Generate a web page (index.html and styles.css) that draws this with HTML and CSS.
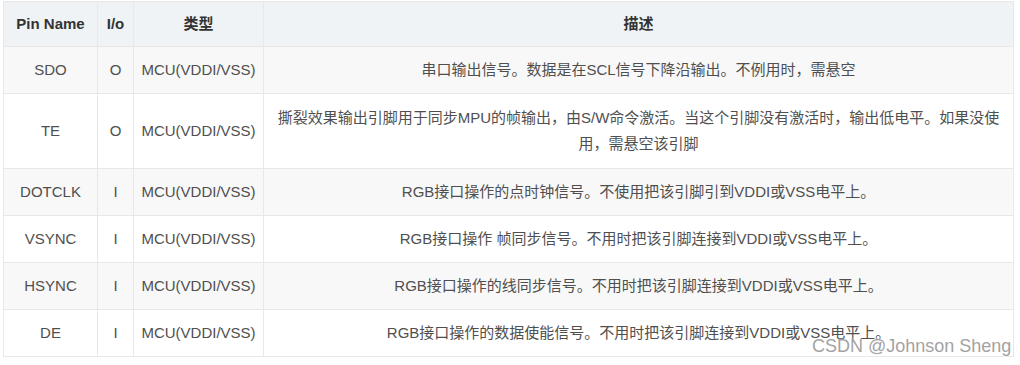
FILE: index.html
```html
<!DOCTYPE html>
<html lang="zh-CN">
<head>
<meta charset="utf-8">
<title>Pin table</title>
<link rel="stylesheet" href="styles.css">
</head>
<body>
<div class="page">
  <table class="pins">
    <colgroup>
      <col class="c-name">
      <col class="c-io">
      <col class="c-type">
      <col class="c-desc">
    </colgroup>
    <thead>
      <tr><th>Pin Name</th><th>I/o</th><th>类型</th><th>描述</th></tr>
    </thead>
    <tbody>
      <tr><td>SDO</td><td>O</td><td>MCU(VDDI/VSS)</td><td>串口输出信号。数据是在SCL信号下降沿输出。不例用时，需悬空</td></tr>
      <tr class="tall"><td>TE</td><td>O</td><td>MCU(VDDI/VSS)</td><td>撕裂效果输出引脚用于同步MPU的帧输出，由S/W命令激活。当这个引脚没有激活时，输出低电平。如果没使用，需悬空该引脚</td></tr>
      <tr><td>DOTCLK</td><td>I</td><td>MCU(VDDI/VSS)</td><td>RGB接口操作的点时钟信号。不使用把该引脚引到VDDI或VSS电平上。</td></tr>
      <tr><td>VSYNC</td><td>I</td><td>MCU(VDDI/VSS)</td><td>RGB接口操作 帧同步信号。不用时把该引脚连接到VDDI或VSS电平上。</td></tr>
      <tr><td>HSYNC</td><td>I</td><td>MCU(VDDI/VSS)</td><td>RGB接口操作的线同步信号。不用时把该引脚连接到VDDI或VSS电平上。</td></tr>
      <tr><td>DE</td><td>I</td><td>MCU(VDDI/VSS)</td><td>RGB接口操作的数据使能信号。不用时把该引脚连接到VDDI或VSS电平上。</td></tr>
    </tbody>
  </table>
  <div class="watermark">CSDN @Johnson Sheng</div>
</div>
</body>
</html>
```

FILE: styles.css
```css
html, body {
  margin: 0;
  padding: 0;
  background: #ffffff;
}

.page {
  position: relative;
  width: 1020px;
  height: 365px;
  padding: 1px 0 0 3px;
  box-sizing: border-box;
  font-family: "Liberation Sans", "Noto Sans CJK SC", sans-serif;
}

.pins {
  width: 1011px;
  table-layout: fixed;
  border-collapse: collapse;
  font-size: 15px;
  line-height: 26px;
  color: #4f4f4f;
}

.c-name { width: 94px; }
.c-io { width: 36px; }
.c-type { width: 130px; }

.pins th,
.pins td {
  border: 1px solid #e8e8e8;
  text-align: center;
  vertical-align: middle;
  padding: 10px 10px;
}

.pins th {
  background: #eff3f6;
  color: #333333;
  font-weight: bold;
  padding: 9px 8px;
}

.pins td:nth-child(-n+3) {
  padding-left: 6px;
  padding-right: 6px;
  white-space: nowrap;
}

.pins .tall td {
  padding-top: 11px;
  padding-bottom: 11px;
}

.pins tbody tr:nth-child(odd) td {
  background: #f8f8f8;
}

.watermark {
  position: absolute;
  left: 812px;
  top: 336px;
  font-size: 18px;
  line-height: 20px;
  color: #a3a3a3;
  white-space: nowrap;
  text-shadow: 0 0 2px #ffffff;
}
```
